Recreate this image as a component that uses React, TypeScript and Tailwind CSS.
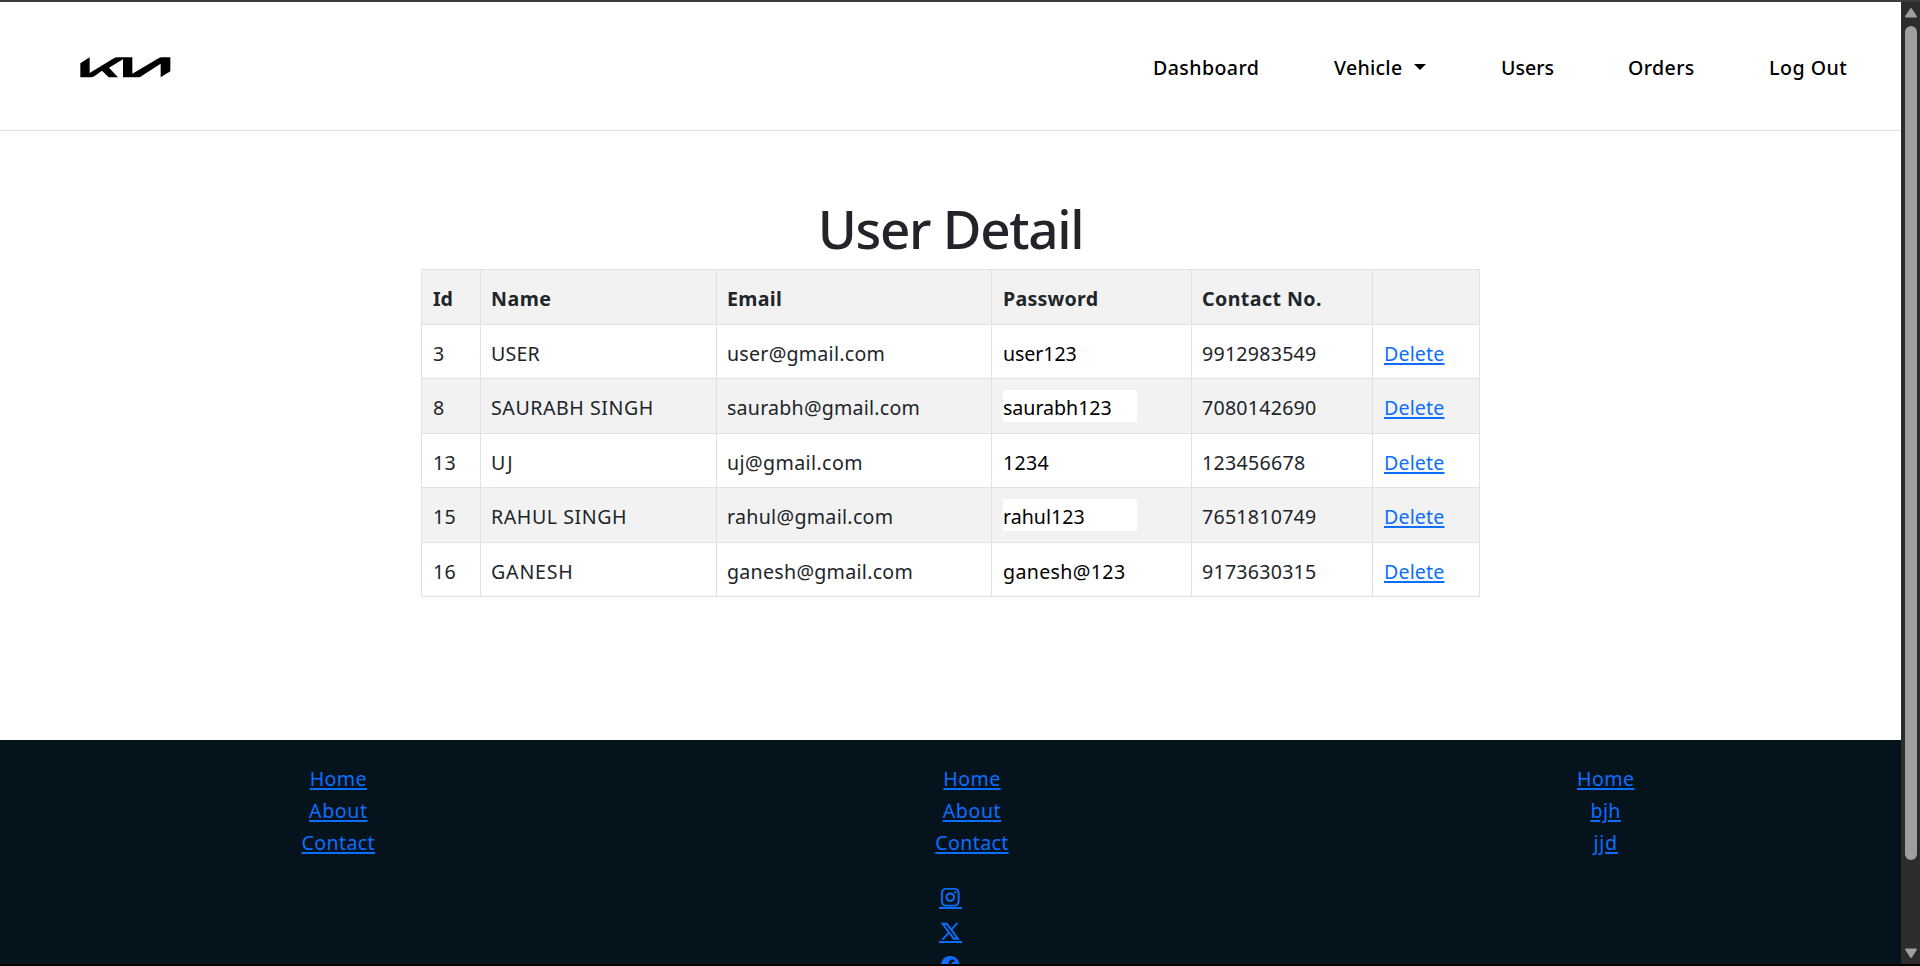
import { RiFacebookCircleFill, RiInstagramLine, RiTwitterXLine } from "react-icons/ri";

type Item = { text: string; cls: string };
type User = { id: string; name: Item; email: Item; password: Item; contact: Item };

const headers: Item[] = [
  { text: "Id", cls: "pl-[11px]" },
  { text: "Name", cls: "pl-[10px] tracking-[0.5px]" },
  { text: "Email", cls: "pl-[10px] tracking-[0.33px]" },
  { text: "Password", cls: "pl-[11px] tracking-[0.25px]" },
  { text: "Contact No.", cls: "pl-[10px] tracking-[0.43px]" },
  { text: "", cls: "" },
];

const users: User[] = [
  {
    id: "3",
    name: { text: "USER", cls: "tracking-[0.18px]" },
    email: { text: "user@gmail.com", cls: "tracking-[0.25px]" },
    password: { text: "user123", cls: "tracking-[-0.09px]" },
    contact: { text: "9912983549", cls: "tracking-[0.24px]" },
  },
  {
    id: "8",
    name: { text: "SAURABH SINGH", cls: "tracking-[0.55px]" },
    email: { text: "saurabh@gmail.com", cls: "tracking-[0.22px]" },
    password: { text: "saurabh123", cls: "tracking-[-0.03px]" },
    contact: { text: "7080142690", cls: "tracking-[0.24px]" },
  },
  {
    id: "13",
    name: { text: "UJ", cls: "tracking-[2px]" },
    email: { text: "uj@gmail.com", cls: "tracking-[0.4px]" },
    password: { text: "1234", cls: "tracking-[0.29px]" },
    contact: { text: "123456678", cls: "tracking-[0.29px]" },
  },
  {
    id: "15",
    name: { text: "RAHUL SINGH", cls: "tracking-[0.55px]" },
    email: { text: "rahul@gmail.com", cls: "tracking-[0.3px]" },
    password: { text: "rahul123", cls: "tracking-[0.02px]" },
    contact: { text: "7651810749", cls: "tracking-[0.24px]" },
  },
  {
    id: "16",
    name: { text: "GANESH", cls: "tracking-[0.8px]" },
    email: { text: "ganesh@gmail.com", cls: "tracking-[0.28px]" },
    password: { text: "ganesh@123", cls: "tracking-[0.35px]" },
    contact: { text: "9173630315", cls: "tracking-[0.24px]" },
  },
];

const footerColumns: Item[][] = [
  [
    { text: "Home", cls: "tracking-[0.4px]" },
    { text: "About", cls: "tracking-[0.6px]" },
    { text: "Contact", cls: "tracking-[0.36px]" },
  ],
  [
    { text: "Home", cls: "tracking-[0.4px]" },
    { text: "About", cls: "tracking-[0.6px]" },
    { text: "Contact", cls: "tracking-[0.36px]" },
  ],
  [
    { text: "Home", cls: "tracking-[0.4px]" },
    { text: "bjh", cls: "tracking-[0.4px]" },
    { text: "jjd", cls: "tracking-[0.8px]" },
  ],
];

const LINK = "text-[#0d6efd] underline decoration-2 underline-offset-2";

function Logo() {
  return (
    <svg className="mt-0.5 ml-20 h-[21px] w-[91px]" viewBox="61 78 273 63" fill="#000">
      <path d="M62 97 90 79V126L160 83Q167 79 175 79H218V128L294 83Q301 79 309 79H332V121L303 139V98L240 139H190V85L148 110 175 139H147L127 119 104 136Q99 139 93 139H62Z" />
    </svg>
  );
}

function Header() {
  return (
    <header className="flex h-[129px] shrink-0 items-center justify-between border-b border-[#dee2e6]">
      <Logo />
      <nav className="flex pt-[3px] text-[19.6px] leading-[34px] font-medium text-black">
        <a className="w-[181px] tracking-[0.4px]">Dashboard</a>
        <a className="flex w-[167px] items-center tracking-[0.25px]">
          <span className="w-20">Vehicle</span>
          <svg className="mb-0.5 h-1.5 w-3" viewBox="0 0 12 6">
            <path d="M0 0H12L6 6Z" />
          </svg>
        </a>
        <a className="w-[127px]">Users</a>
        <a className="w-[141px] tracking-[0.38px]">Orders</a>
        <a className="w-[132px] tracking-[0.5px]">Log Out</a>
      </nav>
    </header>
  );
}

function Cell({ item }: { item: Item }) {
  return <div className={`border-t border-l border-[#dee2e6] pt-3 ${item.cls}`}>{item.text}</div>;
}

const ROW = "grid grid-cols-[59px_236px_275px_200px_181px_107px] border-r border-[#dee2e6]";

function UserTable() {
  return (
    <div className="w-[1059px] border-b border-[#dee2e6] text-[19.6px] leading-[34px] whitespace-nowrap text-[#212529]">
      <div className={`${ROW} h-[55px] bg-[#f2f2f2] font-bold`}>
        {headers.map((h, i) => (
          <Cell key={i} item={h} />
        ))}
      </div>
      {users.map((u, i) => (
        <div key={u.id} className={`${ROW} ${i % 2 ? "h-[55px] bg-[#f2f2f2]" : "h-[54px]"}`}>
          <Cell item={{ text: u.id, cls: "pl-[11px] tracking-[0.2px]" }} />
          <Cell item={{ text: u.name.text, cls: `pl-[10px] ${u.name.cls}` }} />
          <Cell item={{ text: u.email.text, cls: `pl-[10px] ${u.email.cls}` }} />
          <div className="border-t border-l border-[#dee2e6] pt-[11px] pl-[11px]">
            <div className={`h-8 w-[134px] bg-white leading-9 text-black ${u.password.cls}`}>{u.password.text}</div>
          </div>
          <Cell item={{ text: u.contact.text, cls: `pl-[10px] ${u.contact.cls}` }} />
          <div className="border-t border-l border-[#dee2e6] pt-3 pl-[11px]">
            <a className={`${LINK} tracking-[0.15px]`}>Delete</a>
          </div>
        </div>
      ))}
    </div>
  );
}

function Footer() {
  return (
    <footer className="h-[224px] shrink-0 overflow-hidden bg-[#05131d] pt-[23px] text-[19.6px] leading-8">
      <div className="grid grid-cols-3">
        {footerColumns.map((col, i) => (
          <ul key={i} className="pl-[43px] text-center">
            {col.map((l) => (
              <li key={l.text}>
                <a className={`${LINK} ${l.cls}`}>{l.text}</a>
              </li>
            ))}
          </ul>
        ))}
      </div>
      <div className="mt-[27px] flex flex-col items-center gap-[11.5px] text-[#0d6efd]">
        <a className="border-b-2 border-[#0d6efd]">
          <RiInstagramLine className="-mb-0.5 h-[22.5px] w-[22.5px]" />
        </a>
        <a className="border-b-2 border-[#0d6efd]">
          <RiTwitterXLine className="-mb-0.5 h-[22.5px] w-[22.5px]" />
        </a>
        <a className="border-b-2 border-[#0d6efd]">
          <RiFacebookCircleFill className="-mb-0.5 h-[22.5px] w-[22.5px]" />
        </a>
      </div>
    </footer>
  );
}

function Scrollbar() {
  return (
    <div className="flex w-[19px] flex-col items-center justify-between bg-[#2c2c2c] pt-1.5 pb-1.5">
      <svg className="h-[10px] w-3 shrink-0" viewBox="0 0 12 10" fill="#9f9f9f">
        <path d="M5 .8Q6-.6 7 .8L11.7 8Q12.4 9.6 11 9.6H1Q-.4 9.6 .3 8Z" />
      </svg>
      <div className="mt-2 h-[834px] w-3 rounded-full bg-[#9f9f9f]" />
      <div className="grow" />
      <svg className="h-[10px] w-3 shrink-0" viewBox="0 0 12 10" fill="#9f9f9f">
        <path d="M5 9.2Q6 10.6 7 9.2L11.7 2Q12.4 .4 11 .4H1Q-.4 .4 .3 2Z" />
      </svg>
    </div>
  );
}

export default function App() {
  return (
    <div className="flex h-[966px] w-[1920px] flex-col overflow-hidden border-t-2 border-b-2 border-t-[#3b3d38] border-b-black bg-white font-['Noto_Sans',sans-serif]">
      <div className="flex h-[962px]">
        <div className="flex w-[1901px] flex-col">
          <Header />
          <main className="flex h-[609px] shrink-0 flex-col items-center pt-[65px]">
            <h1 className="h-[73px] text-[53px] leading-[65px] font-medium tracking-[-1.3px] text-[#212529]">User Detail</h1>
            <UserTable />
          </main>
          <Footer />
        </div>
        <Scrollbar />
      </div>
    </div>
  );
}
